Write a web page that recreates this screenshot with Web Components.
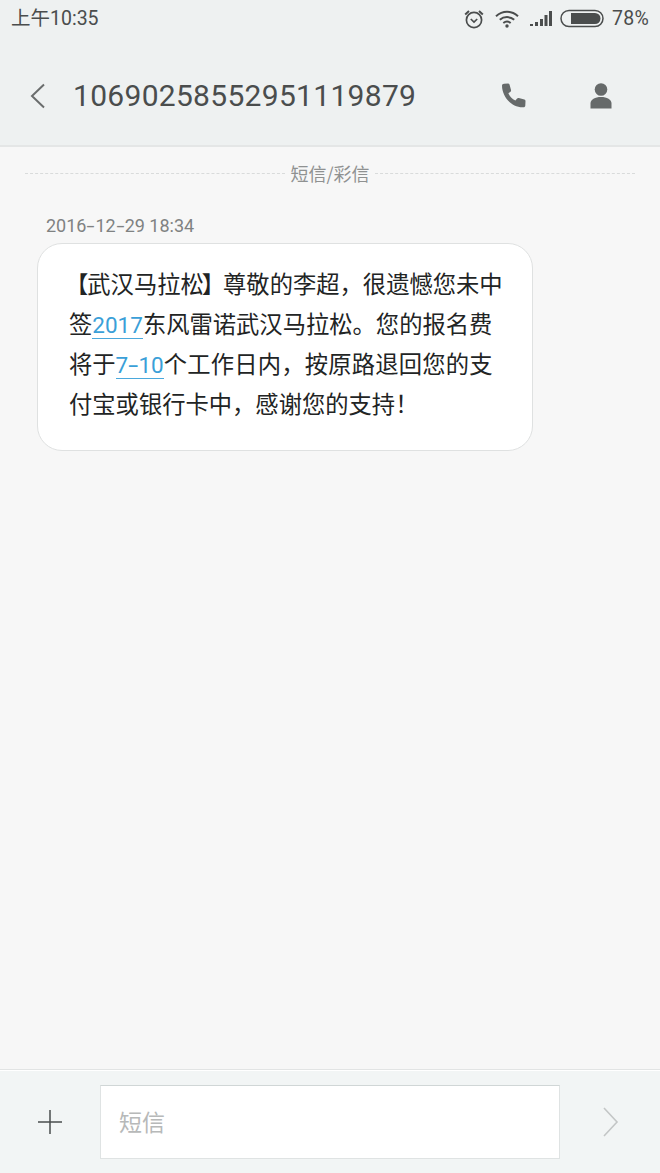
<!DOCTYPE html>
<html lang="zh-CN"><head><meta charset="utf-8">
<style>
html,body{margin:0;padding:0;height:100%}
body{width:660px;height:1173px;overflow:hidden;background:#f7f7f7;font-family:"Roboto","Noto Sans CJK SC",sans-serif}
sms-app{height:1173px}
</style></head><body>
<sms-app>
  <status-bar slot="status"></status-bar>
  <sms-header slot="header" number="10690258552951119879"></sms-header>
  <sms-divider slot="divider">短信/彩信</sms-divider>
  <sms-time slot="messages"></sms-time>
  <sms-bubble slot="messages"></sms-bubble>
  <sms-composer slot="composer"></sms-composer>
</sms-app>
<script>
const def=(name,html)=>customElements.define(name,class extends HTMLElement{
  constructor(){super();this.attachShadow({mode:'open'}).innerHTML=html}
});
def('sms-app',`<style>
:host{display:flex;flex-direction:column;width:660px;height:1173px;background:#f7f7f7}
.top{background:#eef1f1;border-bottom:2px solid #e4e6e6;height:145px;flex:none;display:flex;flex-direction:column}
.main{flex:1;min-height:0;display:flex;flex-direction:column}
</style>
<div class="top"><slot name="status"></slot><slot name="header"></slot></div>
<div class="main"><slot name="divider"></slot><slot name="messages"></slot></div>
<slot name="composer"></slot>`);
def('status-bar',`<style>
:host{display:flex;align-items:center;height:38px;padding:0 11px 0 11px;color:#4a4d4d;font:19.5px/38px Roboto,"Noto Sans CJK SC",sans-serif;box-sizing:border-box}
.sp{flex:1}
svg{display:block;flex:none}
.pct{margin-left:7px;font-size:19.5px;letter-spacing:.3px}
</style>
<span>上午10:35</span><span class="sp"></span>
<svg width="22" height="22" viewBox="0 0 22 22" style="margin-right:9px" fill="none" stroke="#4a4d4d">
<circle cx="11" cy="12" r="7.6" stroke-width="1.7"/><path d="M7.8 11l3.2 3 3.2-3" stroke-width="1.7"/><path d="M2.2 6.5L6 3M19.800 6.500L16 3" stroke-width="2"/></svg>
<svg width="26" height="20" viewBox="0 0 26 20" style="margin-right:9px" fill="none" stroke="#4a4d4d" stroke-width="2">
<path d="M2 7.2C8.600 1.300 17.400 1.300 24 7.200"/><path d="M5.800 10.800C10 7.200 16 7.200 20.200 10.800"/><path d="M9.300 14C11.500 12.300 14.500 12.300 16.700 14"/><circle cx="13" cy="17" r="1.700" fill="#4a4d4d" stroke="none"/></svg>
<svg width="24" height="18" viewBox="0 0 24 18" style="margin-right:7px" fill="#4a4d4d">
<rect x="1" y="14" width="3" height="2"/><rect x="6" y="12" width="3" height="4"/><rect x="11" y="9" width="3" height="7"/><rect x="15.500" y="5" width="3" height="11"/><rect x="20" y="1" width="3" height="15"/></svg>
<svg width="45" height="20" viewBox="0 0 45 20" fill="none">
<rect x="1" y="1.500" width="42" height="16" rx="8" stroke="#4a4d4d" stroke-width="1.500"/><path d="M11 4h24a5.500 5.500 0 0 1 0 11H11z" fill="#4a4d4d"/></svg>
<span class="pct">78%</span>`);
customElements.define('sms-header',class extends HTMLElement{
  constructor(){super();this.attachShadow({mode:'open'}).innerHTML=`<style>
:host{display:flex;align-items:center;flex:1;padding:9px 0 0 30px;color:#4a4d4d}
.n{font:30px/1 Roboto,sans-serif;margin-left:28px;letter-spacing:.3px;flex:1}
svg{display:block;flex:none}
</style>
<svg width="15" height="26" viewBox="0 0 15 26" fill="none" stroke="#6a6d6d" stroke-width="2"><path d="M14 1.500L2 13l12 11.500"/></svg>
<span class="n"></span>
<svg width="26" height="26" viewBox="0 0 26 26" fill="#666a6a" style="margin-right:63px"><path d="M1 2.500C1 1.500 2 .8 3 .8L7 .5c.8 0 1.300.4 1.500 1.100L10 7c.2.700 0 1.300-.5 1.700L7.400 10.300c1.300 3.200 3.700 5.700 7 7.200l1.700-2c.5-.5 1-.7 1.700-.5l5.600 1.500c.7.200 1.100.7 1.100 1.500l-.2 4.500c0 1-.8 1.800-1.800 1.800C11 25 1 14 1 2.500z"/></svg>
<svg width="22" height="26" viewBox="0 0 22 26" fill="#666a6a" style="margin-right:48px"><circle cx="11" cy="6.500" r="6.300"/><path d="M.5 25.500v-5C.5 16.500 5 14 11 14s10.500 2.500 10.500 6.500v5z"/></svg>`;
  }
  connectedCallback(){this.shadowRoot.querySelector('.n').textContent=this.getAttribute('number')||''}
});
def('sms-divider',`<style>
:host{display:flex;align-items:center;height:52px;padding:0 25px 0 25px;color:#8f9191;font:18px/1 "Noto Sans CJK SC",sans-serif;gap:5px;box-sizing:border-box}
i{flex:1;border-top:1px dashed #d9dbdb;height:0}
</style><i></i><span><slot></slot></span><i></i>`);
const dash=`<span style="display:inline-block;transform:scaleX(1.6);margin:0 2px">-</span>`;
def('sms-time',`<style>
:host{display:block;margin:15px 0 0 46px;height:29px;color:#7f8282;font:18px/24px Roboto,"Noto Sans CJK SC",sans-serif;white-space:nowrap}
</style>2016${dash}12${dash}29 18:34`);
def('sms-bubble',`<style>
:host{display:block;box-sizing:border-box;margin-left:37px;width:496px;height:208px;background:#fff;border:1px solid #dfe1e1;border-radius:25px;padding:19px 0 0 31px;color:#222424;font:23.300px/40px "Noto Sans CJK SC",sans-serif;white-space:nowrap}
a{color:#3a9fd8;font:22.500px/1 Roboto,sans-serif;border-bottom:1px solid #4aa8dc}
.l{font-family:"Noto Sans CJK TC",sans-serif;margin:0 -1px 0 -4px}
.r{font-family:"Noto Sans CJK TC",sans-serif;margin:0 -2px 0 -2px}
.w{letter-spacing:.2px}
</style><span class="l">【</span>武汉马拉松<span class="r">】</span>尊敬的李超，很遗憾您未中<br>签<a>2017</a>东风雷诺武汉马拉松。您的报名费<br>将于<a>7${dash}10</a><span class="w">个工作日内，按原路退回您的支</span><br>付宝或银行卡中，感谢您的支持！`);
def('sms-composer',`<style>
:host{display:flex;align-items:center;flex:none;box-sizing:border-box;height:104px;background:#f2f5f5;border-top:1px solid #e2e4e4;box-shadow:inset 0 1px 0 #fff;padding:0}
.plus{width:100px;display:flex;justify-content:center;flex:none}
.box{flex:none;box-sizing:border-box;width:460px;height:74px;background:#fff;border:1px solid #dfe3e3;border-top-color:#d0d6d6;display:flex;align-items:center;padding-left:18px;color:#b7b9b9;font:23px/1 "Noto Sans CJK SC",sans-serif}
.send{flex:1;display:flex;justify-content:center}
svg{display:block}
</style>
<div class="plus"><svg width="26" height="26" viewBox="0 0 26 26" stroke="#4a4d4d" stroke-width="1.500"><path d="M13 1v24M1 13h24"/></svg></div>
<div class="box">短信</div>
<div class="send"><svg width="17" height="30" viewBox="0 0 17 30" fill="none" stroke="#c3c6c6" stroke-width="1.600"><path d="M2 1l13 14L2 29"/></svg></div>`);
</script>
</body></html>
